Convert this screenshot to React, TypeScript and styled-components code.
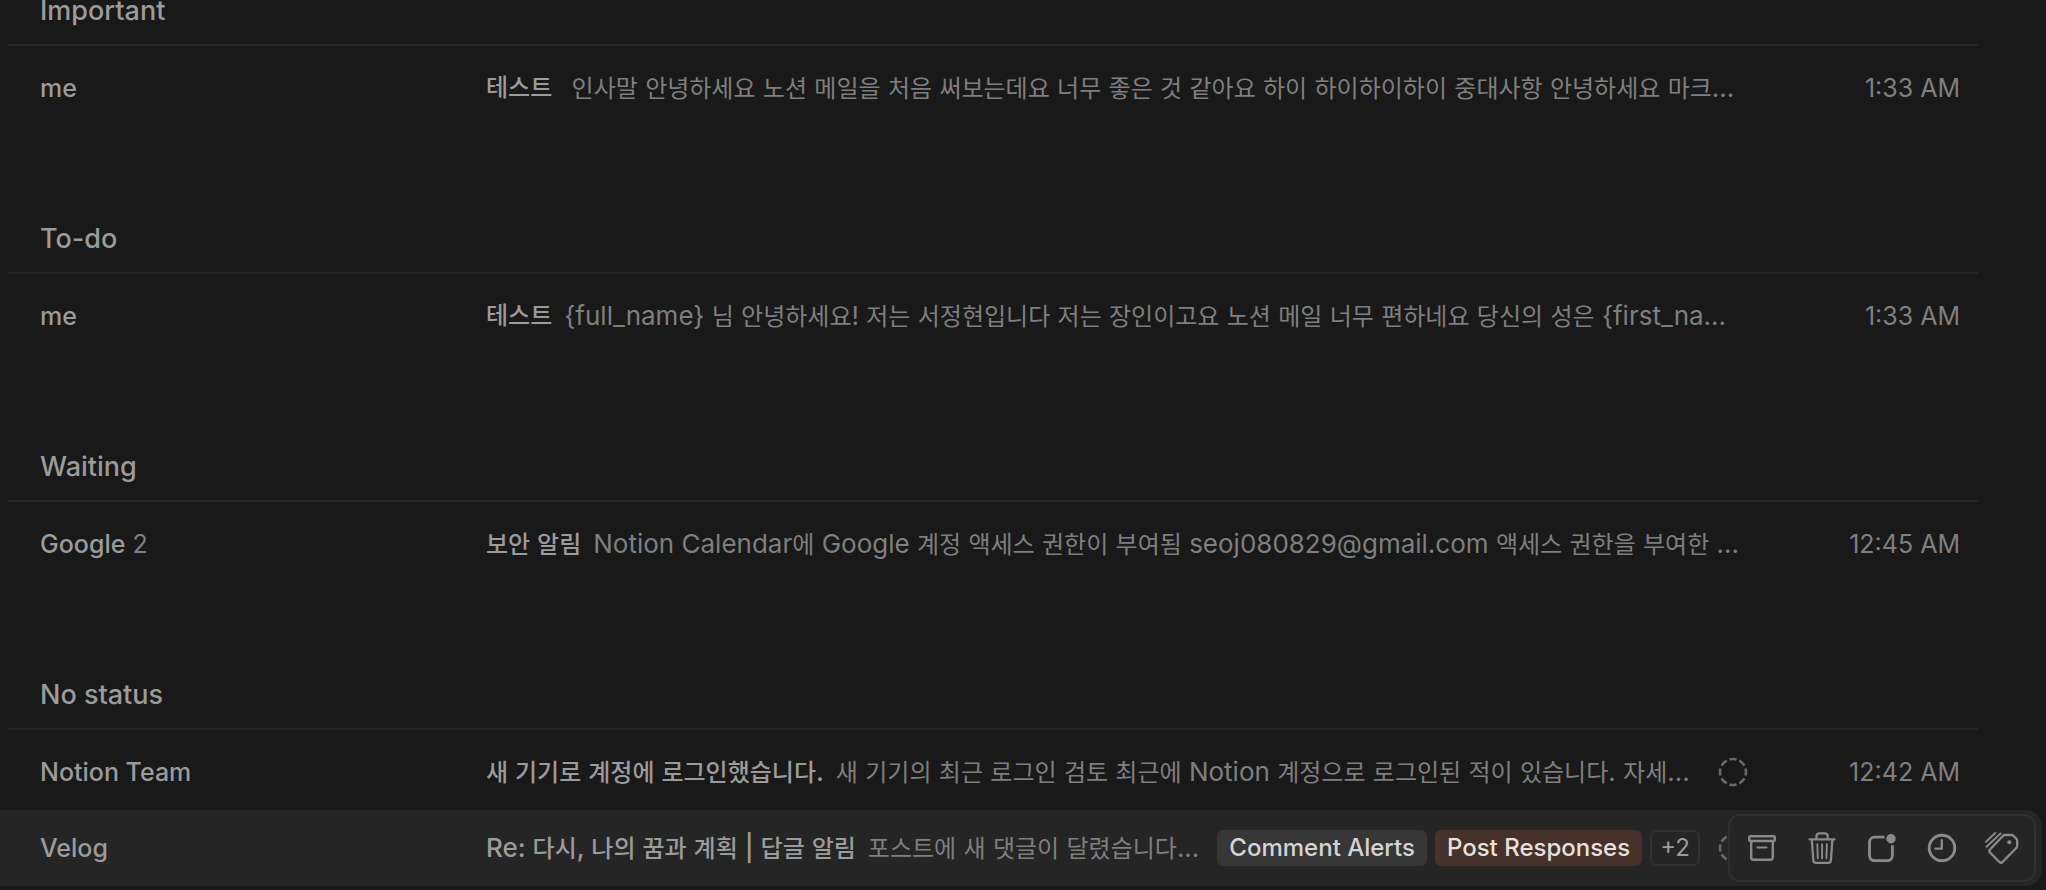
import React from "react";
import styled, { createGlobalStyle, css } from "styled-components";

const GlobalStyle = createGlobalStyle`
  * { box-sizing: border-box; }
  body {
    margin: 0;
    background: #191919;
    color: #9b9b9b;
    font-family: Inter, "Noto Sans CJK KR", sans-serif;
    -webkit-font-smoothing: antialiased;
  }
`;

const Page = styled.main`
  min-height: 100vh;
  background: #191919;
  overflow: hidden;
`;

const Inbox = styled.div`
  display: flex;
  flex-direction: column;
  gap: 76px;
  margin-top: -26px;
  padding-bottom: 4px;
`;

const GroupHeading = styled.h2`
  display: flex;
  align-items: center;
  height: 72px;
  margin: 0 68px 4px 8px;
  padding: 3px 0 0 32px;
  border-bottom: 2px solid #262626;
  font-size: 27px;
  font-weight: 500;
  line-height: 36px;
`;

const MailList = styled.ul`
  margin: 0;
  padding: 0;
  list-style: none;
`;

const MailRow = styled.li<{ $hovered?: boolean }>`
  position: relative;
  display: grid;
  grid-template-columns: 446px minmax(0, 1fr) 212px;
  align-items: center;
  height: 76px;
  margin-right: 4px;
  padding: 0 82px 0 40px;
  font-size: 25px;
  line-height: 36px;
  ${(p) =>
    p.$hovered &&
    css`
      background: #252525;
      border-radius: 0 16px 16px 0;
    `}
`;

const Sender = styled.span`
  font-weight: 500;
`;

const Count = styled.span`
  color: #7f7f7f;
  font-weight: 400;
`;

const Content = styled.div`
  display: flex;
  align-items: center;
  min-width: 0;
  white-space: pre;
`;

const Subject = styled.span`
  font-size: 24px;
  font-weight: 500;
`;

const Preview = styled.span`
  margin-left: 12px;
  color: #7f7f7f;
  font-size: 24px;
`;

const Latin = styled.span`
  font-size: 26px;
`;

const Time = styled.time`
  color: #7f7f7f;
  text-align: right;
`;

const Tags = styled.div`
  display: flex;
  gap: 8px;
  margin-left: 18px;
`;

const tagTones = {
  gray: css`
    background: #373737;
    color: #d4d4d4;
  `,
  brown: css`
    background: #46322a;
    color: #e6e1de;
  `,
  outline: css`
    padding: 0 8px;
    border: 2px solid #303030;
    color: #9b9b9b;
    font-weight: 400;
  `,
};

const Tag = styled.span<{ $tone: keyof typeof tagTones }>`
  display: flex;
  align-items: center;
  height: 36px;
  padding: 0 12px;
  border-radius: 6px;
  font-size: 24px;
  font-weight: 500;
  ${(p) => tagTones[p.$tone]}
`;

const Status = styled.svg`
  flex: none;
  width: 30px;
  height: 30px;
  margin-left: auto;
`;

const Actions = styled.div`
  position: absolute;
  top: 4px;
  right: 6px;
  display: flex;
  align-items: center;
  height: 68px;
  padding: 0 2px;
  border: 2px solid #303030;
  border-radius: 12px;
  background: #252525;
`;

const ActionButton = styled.button`
  display: flex;
  align-items: center;
  justify-content: center;
  width: 60px;
  height: 60px;
  padding: 0;
  border: 0;
  background: none;
  color: #8a8a8a;

  svg {
    width: 36px;
    height: 36px;
    fill: none;
    stroke: currentColor;
    stroke-linejoin: round;
    stroke-linecap: round;
  }
`;

const NoStatus = () => (
  <Status viewBox="0 0 30 30" role="img" aria-label="No status">
    <circle cx="15" cy="15" r="13" fill="none" stroke="#6a6a6a" strokeWidth="2.6" pathLength="80" strokeDasharray="7 3" strokeDashoffset="3.5" />
  </Status>
);

const ArchiveIcon = () => (
  <svg viewBox="0 0 36 36">
    <rect x="5.2" y="6.200" width="25.600" height="4.800" rx="1" strokeWidth="2.400" />
    <path d="M7.200 11v16.500a2.300 2.300 0 0 0 2.300 2.300h17a2.300 2.300 0 0 0 2.300-2.300V11" strokeWidth="2.400" />
    <path d="M13.500 17.500h9" strokeWidth="2.200" />
  </svg>
);

const TrashIcon = () => (
  <svg viewBox="0 0 36 36">
    <path d="M5.500 9.300h25M12.500 9.300V6a2.700 2.700 0 0 1 2.700-2.700h5.800a2.700 2.700 0 0 1 2.700 2.700v3.300M7.800 9.300l1.500 21a2.600 2.600 0 0 0 2.600 2.500h12.400a2.600 2.600 0 0 0 2.600-2.500l1.500-21" strokeWidth="2.300" />
    <path d="M13.300 14.200l.5 14.200M18.100 14.200v14.200M22.900 14.200l-.5 14.200" strokeWidth="1.900" />
  </svg>
);

const UnreadIcon = () => (
  <svg viewBox="0 0 36 36">
    <path d="M20.500 7.200H10.500A5 5 0 0 0 5.500 12.200v13.400a5 5 0 0 0 5 5h12.900a5 5 0 0 0 5-5V15.300" strokeWidth="2.800" strokeLinecap="butt" />
    <circle cx="27" cy="8.700" r="4.700" fill="currentColor" stroke="none" />
  </svg>
);

const ClockIcon = () => (
  <svg viewBox="0 0 36 36">
    <circle cx="18" cy="18" r="12.800" strokeWidth="2.900" />
    <path d="M17.800 10.200v8.500h-6.500" strokeWidth="2.300" />
  </svg>
);

const LabelIcon = () => (
  <svg viewBox="0 0 36 36">
    <path d="M19.800 5h7.700q1 0 1.700.7l3.300 3.300q.7.700.7 1.700v5q0 1.300-1 2.300L18.600 32q-1.600 1.400-3.200 0L6 22.500q-1.500-1.500 0-3z" strokeWidth="2.400" />
    <circle cx="25.300" cy="12.300" r="2" fill="currentColor" stroke="none" />
    <path d="M2.500 16.800L16.500 3.500M2 11.800L11.500 2.800" strokeWidth="1.900" />
  </svg>
);

const actions = [
  { label: "Archive", icon: <ArchiveIcon /> },
  { label: "Delete", icon: <TrashIcon /> },
  { label: "Mark as unread", icon: <UnreadIcon /> },
  { label: "Remind me", icon: <ClockIcon /> },
  { label: "Add label", icon: <LabelIcon /> },
];

// Hangul glyphs run larger than Latin at one size, so the Latin runs are set a step up.
const MixedText = ({ text }: { text: string }) => (
  <>
    {text.split(/([^가-힣]+)/).map((run, i) => (i % 2 ? <Latin key={i}>{run}</Latin> : run))}
  </>
);

type Mail = {
  sender: string;
  count?: number;
  subject: string;
  preview: string;
  time?: string;
  status?: boolean;
  tags?: { text: string; tone: keyof typeof tagTones }[];
  hovered?: boolean;
};

const groups: { title: string; mails: Mail[] }[] = [
  {
    title: "Important",
    mails: [
      {
        sender: "me",
        subject: "테스트",
        preview: " 인사말 안녕하세요 노션 메일을 처음 써보는데요 너무 좋은 것 같아요 하이 하이하이하이 중대사항 안녕하세요 마크...",
        time: "1:33 AM",
      },
    ],
  },
  {
    title: "To-do",
    mails: [
      {
        sender: "me",
        subject: "테스트",
        preview: "{full_name} 님 안녕하세요! 저는 서정현입니다 저는 장인이고요 노션 메일 너무 편하네요 당신의 성은 {first_na...",
        time: "1:33 AM",
      },
    ],
  },
  {
    title: "Waiting",
    mails: [
      {
        sender: "Google",
        count: 2,
        subject: "보안 알림",
        preview: "Notion Calendar에 Google 계정 액세스 권한이 부여됨 seoj080829@gmail.com 액세스 권한을 부여한 ...",
        time: "12:45 AM",
      },
    ],
  },
  {
    title: "No status",
    mails: [
      {
        sender: "Notion Team",
        subject: "새 기기로 계정에 로그인했습니다.",
        preview: "새 기기의 최근 로그인 검토 최근에 Notion 계정으로 로그인된 적이 있습니다. 자세...",
        time: "12:42 AM",
        status: true,
      },
      {
        sender: "Velog",
        subject: "Re: 다시, 나의 꿈과 계획 | 답글 알림",
        preview: "포스트에 새 댓글이 달렸습니다...",
        status: true,
        hovered: true,
        tags: [
          { text: "Comment Alerts", tone: "gray" },
          { text: "Post Responses", tone: "brown" },
          { text: "+2", tone: "outline" },
        ],
      },
    ],
  },
];

export default function App() {
  return (
    <Page>
      <GlobalStyle />
      <Inbox>
        {groups.map((group) => (
          <section key={group.title}>
            <GroupHeading>{group.title}</GroupHeading>
            <MailList>
              {group.mails.map((mail) => (
                <MailRow key={mail.sender} $hovered={mail.hovered}>
                  <Sender>
                    {mail.sender}
                    {mail.count && <Count> {mail.count}</Count>}
                  </Sender>
                  <Content>
                    <Subject>
                      <MixedText text={mail.subject} />
                    </Subject>
                    <Preview>
                      <MixedText text={mail.preview} />
                    </Preview>
                    {mail.tags && (
                      <Tags>
                        {mail.tags.map((tag) => (
                          <Tag key={tag.text} $tone={tag.tone}>
                            {tag.text}
                          </Tag>
                        ))}
                      </Tags>
                    )}
                    {mail.status && <NoStatus />}
                  </Content>
                  {mail.time && <Time>{mail.time}</Time>}
                  {mail.hovered && (
                    <Actions>
                      {actions.map((action) => (
                        <ActionButton key={action.label} type="button" aria-label={action.label}>
                          {action.icon}
                        </ActionButton>
                      ))}
                    </Actions>
                  )}
                </MailRow>
              ))}
            </MailList>
          </section>
        ))}
      </Inbox>
    </Page>
  );
}
